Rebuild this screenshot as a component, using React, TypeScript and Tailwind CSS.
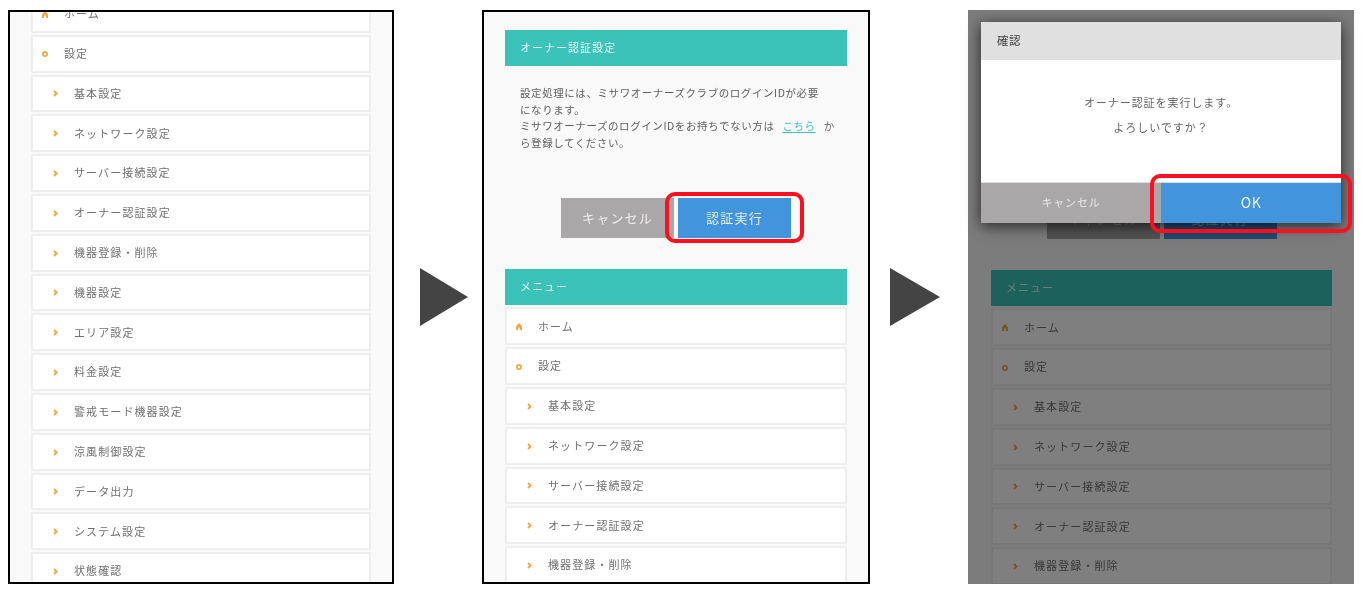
import React from "react";

const ORANGE = "#f9a441";

function HomeIcon() {
  return (
    <svg width="6" height="7" viewBox="0 0 6 7" className="shrink-0">
      <path d="M3 0 L6 3.2 V7 H3.9 V4.6 H2.1 V7 H0 V3.2 Z" fill={ORANGE} />
    </svg>
  );
}

function RingIcon() {
  return (
    <svg width="6" height="6" viewBox="0 0 6 6" className="shrink-0">
      <circle cx="3" cy="3" r="2.1" fill="none" stroke={ORANGE} strokeWidth="1.7" />
    </svg>
  );
}

function ChevronIcon() {
  return (
    <svg width="5" height="7" viewBox="0 0 5 7" className="shrink-0">
      <path d="M1 1 L3.6 3.5 L1 6" fill="none" stroke={ORANGE} strokeWidth="1.8" />
    </svg>
  );
}

function Item({ label, kind }: { label: string; kind: "home" | "ring" | "sub" }) {
  return (
    <div className="h-[37.8px] mb-[2px] border-2 border-[#eeeeee] bg-white flex items-center shrink-0 text-[11px] tracking-[1.1px] text-[#707070]">
      {kind === "sub" ? (
        <>
          <span className="w-[41px] pl-[20px] flex items-center pt-[1px]"><ChevronIcon /></span>
          <span className="pb-[1px]">{label}</span>
        </>
      ) : (
        <>
          <span className="w-[31px] pl-[9px] flex items-center pt-[1px]">
            {kind === "home" ? <HomeIcon /> : <RingIcon />}
          </span>
          <span className="pb-[1px]">{label}</span>
        </>
      )}
    </div>
  );
}

function TealBar({ label }: { label: string }) {
  return (
    <div className="h-[36px] bg-[#3bc2b9] flex items-center pl-[15px] pb-[2px] text-[11px] tracking-[1px] text-[#e8f8f6] shrink-0">
      {label}
    </div>
  );
}

const subsA = ["基本設定", "ネットワーク設定", "サーバー接続設定", "オーナー認証設定", "機器登録・削除"];
const subsB = ["機器設定", "エリア設定", "料金設定", "警戒モード機器設定", "涼風制御設定", "データ出力", "システム設定", "状態確認"];

function OwnerPage() {
  return (
    <>
      <TealBar label="オーナー認証設定" />
      <p className="pl-[15px] mt-[19px] text-[10.5px] leading-[16.6px] tracking-[0.57px] text-[#606060] whitespace-nowrap">
        設定処理には、ミサワオーナーズクラブのログインIDが必要
        <br />
        になります。
        <br />
        ミサワオーナーズのログインIDをお持ちでない方は
        <span className="ml-[8px] mr-[8px] text-[#3bc2b9] underline underline-offset-2">こちら</span>か
        <br />
        ら登録してください。
      </p>
      <div className="flex justify-center gap-[4px] mt-[47px] shrink-0">
        <div className="w-[113px] h-[40px] pb-[2px] bg-[#a9a7a8] flex items-center justify-center text-[13px] tracking-[1.2px] text-[#eeeeee]">
          キャンセル
        </div>
        <div className="w-[113px] h-[40px] pb-[2px] bg-[#4295dc] flex items-center justify-center text-[13px] tracking-[1.2px] text-[#e6f0fa]">
          認証実行
        </div>
      </div>
      <div className="mt-[31px]">
        <TealBar label="メニュー" />
      </div>
      <div className="mt-[2px]">
        <Item label="ホーム" kind="home" />
        <Item label="設定" kind="ring" />
        {subsA.map((s) => (
          <Item key={s} label={s} kind="sub" />
        ))}
      </div>
    </>
  );
}

function Arrow({ w }: { w: number }) {
  return (
    <svg width={w} height="58" viewBox={`0 0 ${w} 58`} className="shrink-0">
      <polygon points={`0,0 ${w},29 0,58`} fill="#444444" />
    </svg>
  );
}

export default function App() {
  return (
    <div className="w-[1368px] h-[592px] bg-white overflow-hidden pt-[10px] pl-[8px] font-['Noto_Sans_CJK_JP','Noto_Sans',sans-serif]">
      <div className="h-[574px] flex items-center">
        {/* left phone */}
        <div className="w-[386px] h-[574px] border-2 border-black bg-[#f9f9f9] overflow-hidden px-[21px] shrink-0">
          <div className="-mt-[17px] blur-[0.35px]">
            <Item label="ホーム" kind="home" />
            <Item label="設定" kind="ring" />
            {subsA.map((s) => (
              <Item key={s} label={s} kind="sub" />
            ))}
            {subsB.map((s) => (
              <Item key={s} label={s} kind="sub" />
            ))}
          </div>
        </div>

        <div className="ml-[26px] mr-[14px] flex"><Arrow w={48} /></div>

        {/* middle phone */}
        <div className="relative w-[388px] h-[574px] border-2 border-black bg-[#f9f9f9] shrink-0">
          <div className="h-full overflow-hidden px-[21px] pt-[18px] blur-[0.35px]">
            <OwnerPage />
          </div>
          <div className="absolute left-[181px] top-[180px] w-[139px] h-[51px] border-4 border-[#fb0f20] rounded-[10px]" />
        </div>

        <div className="ml-[20px] mr-[28px] flex"><Arrow w={50} /></div>

        {/* right phone */}
        <div className="relative w-[386px] h-[574px] bg-[#f9f9f9] shrink-0">
          <div className="h-full overflow-hidden pl-[23px] pr-[22px] pt-[21px] blur-[0.35px]">
            <OwnerPage />
          </div>
          <div className="absolute inset-0 bg-black/50" />
          <div className="absolute left-[13px] top-[12px] w-[360px] h-[201px] flex flex-col shadow-[0_3px_14px_rgba(0,0,0,0.7)] blur-[0.3px]">
            <div className="h-[38px] bg-[#e0e0e0] flex items-center pl-[16px] pb-[1px] text-[11.5px] tracking-[0.6px] text-[#444444] shrink-0">
              確認
            </div>
            <div className="flex-1 bg-white border-b border-[#dddddd] flex flex-col items-center pt-[34px] gap-[9px] text-[11px] leading-[16px] tracking-[0.95px] text-[#666666]">
              <span>オーナー認証を実行します。</span>
              <span>よろしいですか？</span>
            </div>
            <div className="h-[40px] flex shrink-0">
              <div className="flex-1 pb-[1px] bg-[#a9a7a8] flex items-center justify-center text-[11px] tracking-[0.85px] text-[#e8e8e8]">
                キャンセル
              </div>
              <div className="flex-1 pb-[1px] bg-[#4295dc] flex items-center justify-center text-[14px] tracking-[0.5px] text-[#eef5fc]">
                OK
              </div>
            </div>
          </div>
          <div className="absolute left-[182px] top-[164px] w-[202px] h-[59px] border-4 border-[#fb0f20] rounded-[10px]" />
        </div>
      </div>
    </div>
  );
}
